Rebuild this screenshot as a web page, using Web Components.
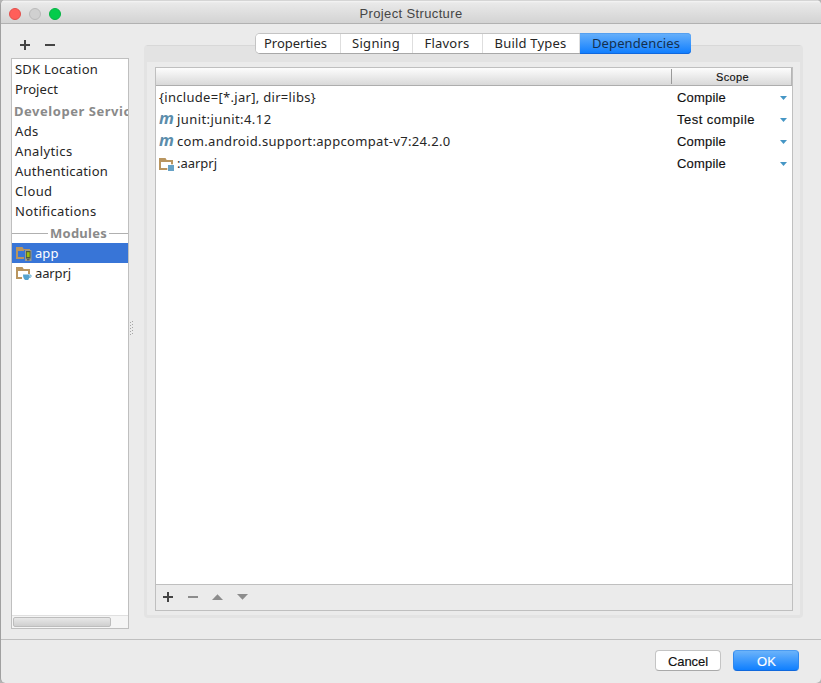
<!DOCTYPE html>
<html lang="en">
<head>
<meta charset="utf-8">
<title>Project Structure</title>
<style>
  html { background: #b4b4b4; }
  body {
    margin: 0;
    height: 683px;
    overflow: hidden;
    font: 13px/20px "Noto Sans", "Open Sans", sans-serif;
    color: #262626;
    --window: #ebebeb;
    --line: #bfbfbf;
    --system: "Liberation Sans", Arial, sans-serif;
  }
</style>
</head>
<body>
<project-dialog></project-dialog>

<script>
// Text that is tracked out to a given width in pixels.
class FitText extends HTMLElement {
  constructor() {
    super();
    this.attachShadow({ mode: "open" });
    this.shadowRoot.innerHTML = `
      <style>
        :host { display: inline-block; flex: none; }
        span { display: inline-block; white-space: nowrap; }
      </style>
      <span><slot></slot></span>
    `;
  }

  connectedCallback() {
    const span = this.shadowRoot.querySelector("span");
    const target = parseFloat(this.getAttribute("width"));
    const count = this.textContent.length;
    const natural = span.getBoundingClientRect().width;
    if (!target || !natural) return;
    span.style.letterSpacing = (target - natural) / count + "px";
  }
}

class ModuleIcon extends HTMLElement {
  constructor() {
    super();
    this.attachShadow({ mode: "open" });
  }

  connectedCallback() {
    const badges = {
      app: `
        <rect x="8" y="3" width="8" height="12" fill="#3875d7"/>
        <rect x="9" y="3" width="6.5" height="11" fill="#9a9a90"/>
        <rect x="10" y="4" width="4.5" height="7.5" fill="#4c5a3c"/>
        <rect x="10.8" y="5.2" width="2.8" height="4.8" fill="#a0bd0a"/>
        <rect x="11" y="12.3" width="2.5" height="1" fill="#444"/>`,
      java: `
        <path d="M6 7h8v8H6z" fill="#fff"/>
        <path d="M7 7.5h7c2.2 0 2.2 3.4-.8 3.4L12.2 13H9.3C7.8 12 7 10.5 7 7.5z" fill="#55a3cf"/>
        <path d="M13.2 8.6h.8c.9 0 .7 1.3-.5 1.3" fill="none" stroke="#fff" stroke-width=".6"/>`,
      lib: `
        <rect x="8.3" y="6.3" width="7.7" height="8" fill="#fff"/>
        <rect x="9" y="7" width="6" height="6" fill="#67a2c6"/>`
    };
    this.shadowRoot.innerHTML = `
      <style>
        :host { display: block; flex: none; width: 16px; height: 16px; }
        svg { display: block; }
      </style>
      <svg width="16" height="16" viewBox="0 0 16 16">
        <path fill="#b9955f" fill-rule="evenodd"
          d="M0 0h6.5l1.2 2H14v10H0zM2 4v6h10V4z"/>
        ${badges[this.getAttribute("kind")] || ""}
      </svg>
    `;
  }
}

class MavenIcon extends HTMLElement {
  constructor() {
    super();
    this.attachShadow({ mode: "open" });
    this.shadowRoot.innerHTML = `
      <style>
        :host {
          display: block;
          flex: none;
          width: 18px;
          font: italic bold 16.5px/18px "Open Sans", sans-serif;
          color: #5b8dab;
        }
      </style>m`;
  }
}

// Small toolbar glyphs: add, remove, up, down.
class ToolIcon extends HTMLElement {
  constructor() {
    super();
    this.attachShadow({ mode: "open" });
  }

  connectedCallback() {
    const shapes = {
      add: "M4 0h2v4h4v2H6v4H4V6H0V4h4z",
      remove: "M0 4h10v2H0z",
      up: "M-1 8L4.5 2.2 10 8z",
      down: "M-1 2L4.5 7.8 10 2z"
    };
    this.shadowRoot.innerHTML = `
      <style>
        :host { display: block; width: 10px; height: 10px; color: #444; }
        :host([muted]) { color: #8c8c8c; }
        svg { display: block; overflow: visible; }
      </style>
      <svg width="10" height="10"><path fill="currentColor" d="${shapes[this.getAttribute("name")]}"/></svg>
    `;
  }
}

class TitleBar extends HTMLElement {
  constructor() {
    super();
    this.attachShadow({ mode: "open" });
    this.shadowRoot.innerHTML = `
      <style>
        :host {
          display: grid;
          grid-template-columns: 1fr auto 1fr;
          align-items: center;
          box-sizing: border-box;
          height: 24px;
          padding: 3px 8px 0;
          border-bottom: 1px solid #b1b1b1;
          border-top: 1px solid #d5d5d5;
          background: linear-gradient(#f5f5f5 0, #e9e9e9 2px, #d3d3d3 100%);
          font-family: var(--system);
          color: #454545;
        }
        .lights { display: flex; gap: 8px; }
        i { box-sizing: border-box; width: 12px; height: 12px; border-radius: 50%; border: 1px solid; }
        .close { background: #ff5f5a; border-color: #e2504c; }
        .min { background: #d0d0d0; border-color: #bababa; }
        .zoom { background: #04cc4b; border-color: #05b343; }
      </style>
      <div class="lights"><i class="close"></i><i class="min"></i><i class="zoom"></i></div>
      <slot></slot>
    `;
  }
}

class SideItem extends HTMLElement {
  constructor() {
    super();
    this.attachShadow({ mode: "open" });
    this.shadowRoot.innerHTML = `
      <style>
        :host { display: flex; height: 20px; padding-left: 3px; }
        :host([selected]) { background: #3875d7; color: #fff; }
        ::slotted(module-icon) { margin: 4px 3px 0 1px; }
      </style>
      <slot></slot>
    `;
  }
}

class SideHeading extends HTMLElement {
  constructor() {
    super();
    this.attachShadow({ mode: "open" });
    this.shadowRoot.innerHTML = `
      <style>
        :host {
          display: flex;
          align-items: center;
          box-sizing: border-box;
          height: 22px;
          padding: 2px 0 0 2px;
          font-weight: bold;
          color: #8a8a8a;
          overflow: hidden;
        }
        :host([ruled]) { padding-left: 0; gap: 2px; }
        :host([ruled])::before, :host([ruled])::after {
          content: "";
          height: 1px;
          background: #b0b0b0;
        }
        :host([ruled])::before { width: 36px; }
        :host([ruled])::after { flex: 1; }
      </style>
      <slot></slot>
    `;
  }
}

class SidePanel extends HTMLElement {
  constructor() {
    super();
    this.attachShadow({ mode: "open" });
    this.shadowRoot.innerHTML = `
      <style>
        :host { display: flex; flex-direction: column; width: 118px; margin-left: 10px; }
        .tools { display: flex; gap: 15px; height: 18px; padding: 16px 0 0 9px; }
        .list {
          display: flex;
          flex-direction: column;
          box-sizing: border-box;
          height: 571px;
          border: 1px solid var(--line);
          background: #fff;
          overflow: hidden;
        }
        .items { flex: 1; }
        .scroll {
          box-sizing: border-box;
          height: 13px;
          padding: 1px;
          border-top: 1px solid #e0e0e0;
          background: #f5f5f5;
        }
        .thumb {
          box-sizing: border-box;
          width: 98px;
          height: 10px;
          border: 1px solid #bdbdbd;
          border-radius: 2px;
          background: linear-gradient(#e8e8e8, #cfcfcf);
        }
      </style>
      <div class="tools"><tool-icon name="add"></tool-icon><tool-icon name="remove"></tool-icon></div>
      <div class="list">
        <div class="items"><slot></slot></div>
        <div class="scroll"><div class="thumb"></div></div>
      </div>
    `;
  }
}

class SplitGrip extends HTMLElement {
  constructor() {
    super();
    this.attachShadow({ mode: "open" });
    this.shadowRoot.innerHTML = `
      <style>
        :host { display: block; width: 15px; padding-top: 296px; }
        svg { display: block; margin-left: 1px; }
      </style>
      <svg width="5" height="16" fill="#a6a6a6">
        <path d="M0 2h1v1H0zM2 1h1v1H2zM0 5h1v1H0zM2 4h1v1H2zM0 8h1v1H0zM2 7h1v1H2zM0 11h1v1H0zM2 10h1v1H2zM0 14h1v1H0zM2 13h1v1H2z"/>
      </svg>
    `;
  }
}

class TabItem extends HTMLElement {
  constructor() {
    super();
    this.attachShadow({ mode: "open" });
    this.shadowRoot.innerHTML = `
      <style>
        :host {
          display: flex;
          justify-content: center;
          box-sizing: border-box;
          height: 19px;
          padding-right: 1px;
          line-height: 19px;
          border-right: 1px solid #dedede;
          background: #fff;
        }
        :host(:first-child) { padding-right: 5px; border-radius: 4px 0 0 4px; }
        :host([selected]) {
          height: 21px;
          margin: -1px -1px -1px 0;
          padding: 1px 0 0 1px;
          border: 0;
          border-radius: 0 4px 4px 0;
          background: linear-gradient(#69b1fa, #0d7dff);
          box-shadow: inset 0 1px #55a0f0, inset 0 -1px #1168dd;
          color: #14304f;
        }
      </style>
      <slot></slot>
    `;
  }
}

class TabPanel extends HTMLElement {
  constructor() {
    super();
    this.attachShadow({ mode: "open" });
    this.shadowRoot.innerHTML = `
      <style>
        :host {
          display: block;
          box-sizing: border-box;
          width: 659px;
          height: 573px;
          margin-top: 21px;
          padding: 0 7px 0 8px;
          border: 3px solid #e3e3e3;
          border-top: 1px solid #d8d8d8;
          border-radius: 4px;
          background: linear-gradient(#e3e3e3 16px, var(--window) 16px);
        }
        .tabs { display: flex; justify-content: center; height: 21px; margin: -13px 2px 0 0; }
        .strip {
          display: flex;
          box-sizing: border-box;
          height: 21px;
          border: 1px solid #c4c4c4;
          border-bottom-color: #a8a8a8;
          border-radius: 5px;
          background: #fff;
        }
      </style>
      <div class="tabs"><div class="strip"><slot name="tab"></slot></div></div>
      <slot></slot>
    `;
  }
}

class DependencyRow extends HTMLElement {
  constructor() {
    super();
    this.attachShadow({ mode: "open" });
    this.shadowRoot.innerHTML = `
      <style>
        :host { display: grid; grid-template-columns: 1fr 121px; height: 22px; line-height: 22px; }
        .name { display: flex; padding-left: 3px; line-height: 20px; }
        .scope {
          display: flex;
          align-items: center;
          justify-content: space-between;
          padding: 0 5px 0 6px;
          font-family: var(--system);
          color: #111;
          -webkit-text-stroke: 0.15px #111;
        }
        ::slotted(module-icon) { margin: 5px 2px 0 0; }
      </style>
      <div class="name"><slot></slot></div>
      <div class="scope">
        <slot name="scope"></slot>
        <svg width="7" height="4"><path d="M0 0h7L3.5 4z" fill="#4596c5"/></svg>
      </div>
    `;
  }
}

class DependencyTable extends HTMLElement {
  constructor() {
    super();
    this.attachShadow({ mode: "open" });
    this.shadowRoot.innerHTML = `
      <style>
        :host {
          display: flex;
          flex-direction: column;
          box-sizing: border-box;
          width: 638px;
          height: 544px;
          margin-top: 13px;
          border: 1px solid var(--line);
          background: #fff;
        }
        .head {
          display: grid;
          grid-template-columns: 1fr 121px;
          align-items: center;
          height: 17px;
          border-bottom: 1px solid #adadad;
          box-shadow: inset -1px 0 #b5b5b5;
          background: linear-gradient(#fdfdfd, #d9d9d9);
        }
        .scope {
          grid-column: 2;
          box-sizing: border-box;
          height: 15px;
          padding-left: 1px;
          border-left: 1px solid #999;
          text-align: center;
          font: 11px/16px var(--system);
          color: #111;
          -webkit-text-stroke: 0.15px #111;
        }
        .rows { flex: 1; padding-top: 1px; }
        .tools {
          display: flex;
          gap: 15px;
          box-sizing: border-box;
          height: 26px;
          padding: 7px;
          border-top: 1px solid var(--line);
          background: var(--window);
        }
      </style>
      <div class="head"><div class="scope"><fit-text width="33">Scope</fit-text></div></div>
      <div class="rows"><slot></slot></div>
      <div class="tools">
        <tool-icon name="add"></tool-icon>
        <tool-icon name="remove" muted></tool-icon>
        <tool-icon name="up" muted></tool-icon>
        <tool-icon name="down" muted></tool-icon>
      </div>
    `;
  }
}

class PushButton extends HTMLElement {
  constructor() {
    super();
    this.attachShadow({ mode: "open" });
    this.shadowRoot.innerHTML = `
      <style>
        :host { display: block; }
        button {
          display: block;
          box-sizing: border-box;
          width: 66px;
          height: 21px;
          padding: 2px 0 0;
          border: 1px solid #c4c4c4;
          border-bottom-color: #a9a9a9;
          border-radius: 4px;
          background: #fff;
          font: 13px/18px var(--system);
          color: #111;
          -webkit-text-stroke: 0.15px;
        }
        :host([primary]) button {
          padding-left: 1px;
          border-color: #4a9bf2 #2f88ee #1068dc;
          background: linear-gradient(#6bb3fa, #0f7fff);
          color: #fff;
        }
      </style>
      <button><slot></slot></button>
    `;
  }
}

class ProjectDialog extends HTMLElement {
  constructor() {
    super();
    this.attachShadow({ mode: "open" });
    this.shadowRoot.innerHTML = `
      <style>
        :host {
          display: flex;
          flex-direction: column;
          box-sizing: border-box;
          height: 683px;
          border-left: 1px solid #a0a0a0;
          border-radius: 5px;
          background: var(--window);
          overflow: hidden;
        }
        main { display: flex; height: 615px; }
        footer {
          display: flex;
          justify-content: flex-end;
          gap: 12px;
          padding: 10px 22px 0 0;
          border-top: 1px solid var(--line);
        }
      </style>
      <title-bar><fit-text width="103">Project Structure</fit-text></title-bar>
      <main>
        <side-panel>
          <side-item><fit-text width="83">SDK Location</fit-text></side-item>
          <side-item><fit-text width="43">Project</fit-text></side-item>
          <side-heading><fit-text width="132">Developer Services</fit-text></side-heading>
          <side-item><fit-text width="23.5">Ads</fit-text></side-item>
          <side-item><fit-text width="57.5">Analytics</fit-text></side-item>
          <side-item><fit-text width="93">Authentication</fit-text></side-item>
          <side-item><fit-text width="37.5">Cloud</fit-text></side-item>
          <side-item><fit-text width="81.5">Notifications</fit-text></side-item>
          <side-heading ruled><fit-text width="57">Modules</fit-text></side-heading>
          <side-item selected><module-icon kind="app"></module-icon><fit-text width="23.5">app</fit-text></side-item>
          <side-item><module-icon kind="java"></module-icon><fit-text width="36">aarprj</fit-text></side-item>
        </side-panel>
        <split-grip></split-grip>
        <tab-panel>
          <tab-item slot="tab" style="width: 85px"><fit-text width="63">Properties</fit-text></tab-item>
          <tab-item slot="tab" style="width: 72px"><fit-text width="48">Signing</fit-text></tab-item>
          <tab-item slot="tab" style="width: 70px"><fit-text width="45">Flavors</fit-text></tab-item>
          <tab-item slot="tab" style="width: 97px"><fit-text width="72">Build Types</fit-text></tab-item>
          <tab-item slot="tab" style="width: 111px" selected><fit-text width="88">Dependencies</fit-text></tab-item>
          <dependency-table>
            <dependency-row>
              <fit-text width="157">{include=[*.jar], dir=libs}</fit-text>
              <fit-text slot="scope" width="49">Compile</fit-text>
            </dependency-row>
            <dependency-row>
              <maven-icon></maven-icon><fit-text width="94.5">junit:junit:4.12</fit-text>
              <fit-text slot="scope" width="78">Test compile</fit-text>
            </dependency-row>
            <dependency-row>
              <maven-icon></maven-icon><fit-text width="273.5">com.android.support:appcompat-v7:24.2.0</fit-text>
              <fit-text slot="scope" width="49">Compile</fit-text>
            </dependency-row>
            <dependency-row>
              <module-icon kind="lib"></module-icon><fit-text width="40">:aarprj</fit-text>
              <fit-text slot="scope" width="49">Compile</fit-text>
            </dependency-row>
          </dependency-table>
        </tab-panel>
      </main>
      <footer>
        <push-button><fit-text width="40">Cancel</fit-text></push-button>
        <push-button primary><fit-text width="19">OK</fit-text></push-button>
      </footer>
    `;
  }
}

customElements.define("tool-icon", ToolIcon);
customElements.define("module-icon", ModuleIcon);
customElements.define("maven-icon", MavenIcon);
customElements.define("title-bar", TitleBar);
customElements.define("side-item", SideItem);
customElements.define("side-heading", SideHeading);
customElements.define("side-panel", SidePanel);
customElements.define("split-grip", SplitGrip);
customElements.define("tab-item", TabItem);
customElements.define("tab-panel", TabPanel);
customElements.define("dependency-row", DependencyRow);
customElements.define("dependency-table", DependencyTable);
customElements.define("push-button", PushButton);
customElements.define("project-dialog", ProjectDialog);
// Last, so that every parent is laid out before the labels are measured.
customElements.define("fit-text", FitText);
</script>
</body>
</html>
